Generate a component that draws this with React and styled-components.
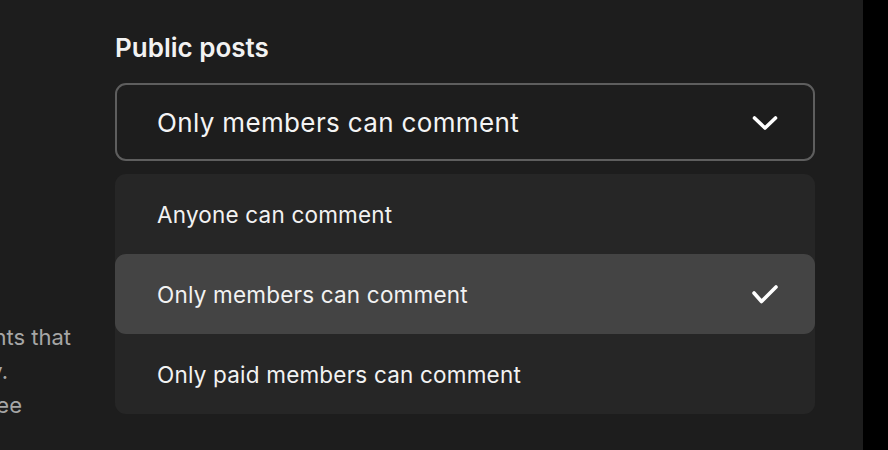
import React from "react";
import styled, { createGlobalStyle } from "styled-components";

const Global = createGlobalStyle`
  html, body { margin: 0; padding: 0; background: #000; }
  body { font-family: Inter, "Noto Sans", sans-serif; -webkit-font-smoothing: antialiased; }
`;

const Page = styled.div`
  display: flex;
  width: 888px;
  height: 450px;
  overflow: hidden;
  background: #000;
`;

const Panel = styled.div`
  display: flex;
  width: 863px;
  height: 450px;
  background: #1d1d1d;
`;

const SideCol = styled.div`
  width: 115px;
  flex: none;
  overflow: hidden;
  display: flex;
  flex-direction: column;
  align-items: flex-end;
  padding-top: 320px;
  box-sizing: border-box;
`;

const SideLine = styled.div`
  white-space: nowrap;
  font-size: 22px;
  line-height: 34px;
  color: #a6a6a6;
  margin-right: ${(p) => p.$end}px;
`;

const Main = styled.div`
  width: 700px;
  flex: none;
  display: flex;
  flex-direction: column;
  padding-top: 31px;
`;

const Label = styled.div`
  font-size: 26px;
  line-height: 34px;
  font-weight: 600;
  color: #f2f2f2;
  margin-bottom: 18px;
`;

const Select = styled.div`
  height: 78px;
  box-sizing: border-box;
  border: 2px solid #5e5e5e;
  border-radius: 11px;
  display: flex;
  align-items: center;
  justify-content: space-between;
  padding: 0 33px 0 40px;
  color: #f4f4f4;
  font-size: 26px;
  letter-spacing: 0.35px;
`;

const Menu = styled.div`
  margin-top: 13px;
  background: #262626;
  border-radius: 11px;
  display: flex;
  flex-direction: column;
`;

const Item = styled.div`
  height: 80px;
  display: flex;
  align-items: center;
  justify-content: space-between;
  padding: 0 35px 0 42px;
  font-size: 22.5px;
  letter-spacing: 0.2px;
  color: #f2f2f2;
  border-radius: 11px;
  background: ${(p) => (p.$selected ? "#444444" : "transparent")};
`;

const Strip = styled.div`
  flex: 1;
  background: #000;
`;

const Chevron = () => (
  <svg width="30" height="22" viewBox="0 0 30 22" fill="none">
    <polyline points="4.5,7 15,17 25.5,7" stroke="#fff" strokeWidth="3.6" strokeLinecap="round" strokeLinejoin="round" />
  </svg>
);

const Check = () => (
  <svg width="30" height="22" viewBox="0 0 30 22" fill="none">
    <polyline points="4,10 11.5,18.5 26,4" stroke="#fff" strokeWidth="3.6" strokeLinecap="round" strokeLinejoin="round" />
  </svg>
);

const options = [
  "Anyone can comment",
  "Only members can comment",
  "Only paid members can comment",
];

export default function App() {
  const selected = 1;
  return (
    <Page>
      <Global />
      <Panel>
        <SideCol>
          <SideLine $end={44}>Readers can leave comments that</SideLine>
          <SideLine $end={107}>appear publicly.</SideLine>
          <SideLine $end={93}>Everyone can see</SideLine>
        </SideCol>
        <Main>
          <Label>Public posts</Label>
          <Select>
            <span>{options[selected]}</span>
            <Chevron />
          </Select>
          <Menu>
            {options.map((o, i) => (
              <Item key={o} $selected={i === selected}>
                <span>{o}</span>
                {i === selected && <Check />}
              </Item>
            ))}
          </Menu>
        </Main>
      </Panel>
      <Strip />
    </Page>
  );
}
